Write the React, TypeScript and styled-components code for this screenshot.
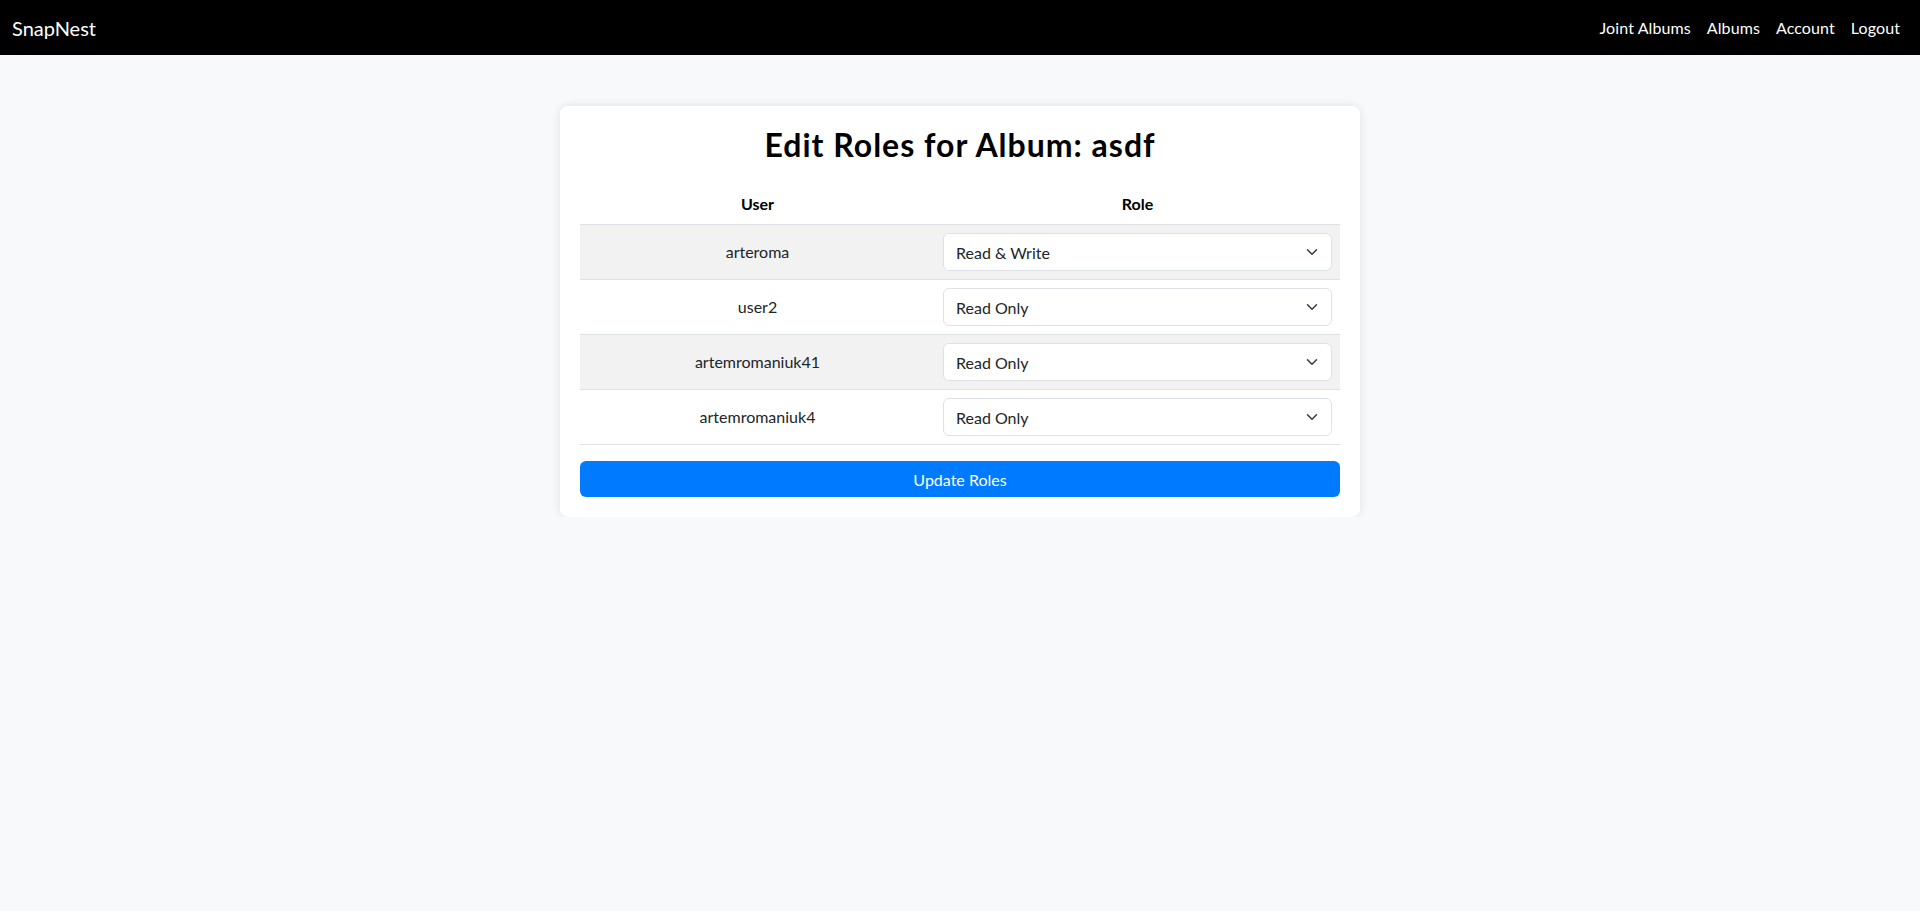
import React, { useState } from "react";
import styled, { createGlobalStyle } from "styled-components";

const Global = createGlobalStyle`
  html, body { margin: 0; padding: 0; }
  body {
    background: #f8f9fa;
    font-family: Lato, "Noto Sans", sans-serif;
    font-size: 16px;
    line-height: 1.5;
    color: #212529;
  }
  * { box-sizing: border-box; }
`;

const NavBar = styled.nav`
  height: 55px;
  background: #000;
  display: flex;
  align-items: center;
  justify-content: space-between;
  padding: 0 12px;
`;

const Brand = styled.a`
  color: #fff;
  font-size: 20px;
  text-decoration: none;
  line-height: 30px;
`;

const NavLinks = styled.div`
  display: flex;
  align-items: center;
`;

const NavLink = styled.a`
  color: #fff;
  font-size: 16px;
  padding: 8px;
  text-decoration: none;
  letter-spacing: 0.1px;
`;

const Card = styled.main`
  width: 800px;
  margin: 51px auto 0;
  padding: 20px;
  background: #fff;
  border-radius: 8px;
  box-shadow: 0 0 10px rgba(0, 0, 0, 0.1);
`;

const Title = styled.h2`
  margin: 0 0 20px;
  font-size: 32px;
  font-weight: 700;
  line-height: 1.2;
  letter-spacing: 1px;
  text-align: center;
  color: #000;
`;

const Table = styled.table`
  width: 100%;
  border-collapse: collapse;
  table-layout: fixed;
`;

const HeadCell = styled.th`
  padding: 8px;
  font-weight: 700;
  text-align: center;
  border-bottom: 1px solid #dee2e6;
  color: #000;
`;

const Row = styled.tr<{ $striped: boolean }>`
  background: ${(p) => (p.$striped ? "#f2f2f2" : "#fff")};
`;

const Cell = styled.td`
  padding: 8px;
  text-align: center;
  vertical-align: middle;
  border-bottom: 1px solid #dee2e6;
`;

const SelectWrap = styled.div`
  position: relative;
  width: 100%;
`;

const Select = styled.select`
  display: block;
  width: 100%;
  height: 38px;
  padding: 0 36px 0 12px;
  font-family: inherit;
  font-size: 16px;
  color: #212529;
  background: #fff;
  border: 1px solid #dee2e6;
  border-radius: 6px;
  appearance: none;
  -webkit-appearance: none;
  outline: none;
`;

const Chevron = styled.svg`
  position: absolute;
  right: 14px;
  top: 50%;
  width: 12px;
  height: 12px;
  transform: translateY(-50%);
  pointer-events: none;
`;

const Button = styled.button`
  display: block;
  width: 100%;
  height: 36px;
  margin-top: 16px;
  background: #007bff;
  color: #fff;
  border: none;
  border-radius: 6px;
  font-family: inherit;
  font-size: 16px;
  cursor: pointer;
`;

const users = [
  { name: "arteroma", role: "rw" },
  { name: "user2", role: "r" },
  { name: "artemromaniuk41", role: "r" },
  { name: "artemromaniuk4", role: "r" },
];

export default function App() {
  const [roles, setRoles] = useState(users.map((u) => u.role));
  return (
    <>
      <Global />
      <NavBar>
        <Brand href="#">SnapNest</Brand>
        <NavLinks>
          <NavLink href="#">Joint Albums</NavLink>
          <NavLink href="#">Albums</NavLink>
          <NavLink href="#">Account</NavLink>
          <NavLink href="#">Logout</NavLink>
        </NavLinks>
      </NavBar>
      <Card>
        <Title>Edit Roles for Album: asdf</Title>
        <Table>
          <colgroup>
            <col style={{ width: "355px" }} />
            <col style={{ width: "405px" }} />
          </colgroup>
          <thead>
            <tr>
              <HeadCell>User</HeadCell>
              <HeadCell>Role</HeadCell>
            </tr>
          </thead>
          <tbody>
            {users.map((u, i) => (
              <Row key={u.name} $striped={i % 2 === 0}>
                <Cell>{u.name}</Cell>
                <Cell>
                  <SelectWrap>
                    <Select
                      value={roles[i]}
                      onChange={(e) => {
                        const next = [...roles];
                        next[i] = e.target.value;
                        setRoles(next);
                      }}
                    >
                      <option value="r">Read Only</option>
                      <option value="rw">Read &amp; Write</option>
                    </Select>
                    <Chevron viewBox="0 0 16 16">
                      <path
                        d="m2 5 6 6 6-6"
                        fill="none"
                        stroke="#343a40"
                        strokeWidth="2"
                        strokeLinecap="round"
                        strokeLinejoin="round"
                      />
                    </Chevron>
                  </SelectWrap>
                </Cell>
              </Row>
            ))}
          </tbody>
        </Table>
        <Button type="button">Update Roles</Button>
      </Card>
    </>
  );
}
